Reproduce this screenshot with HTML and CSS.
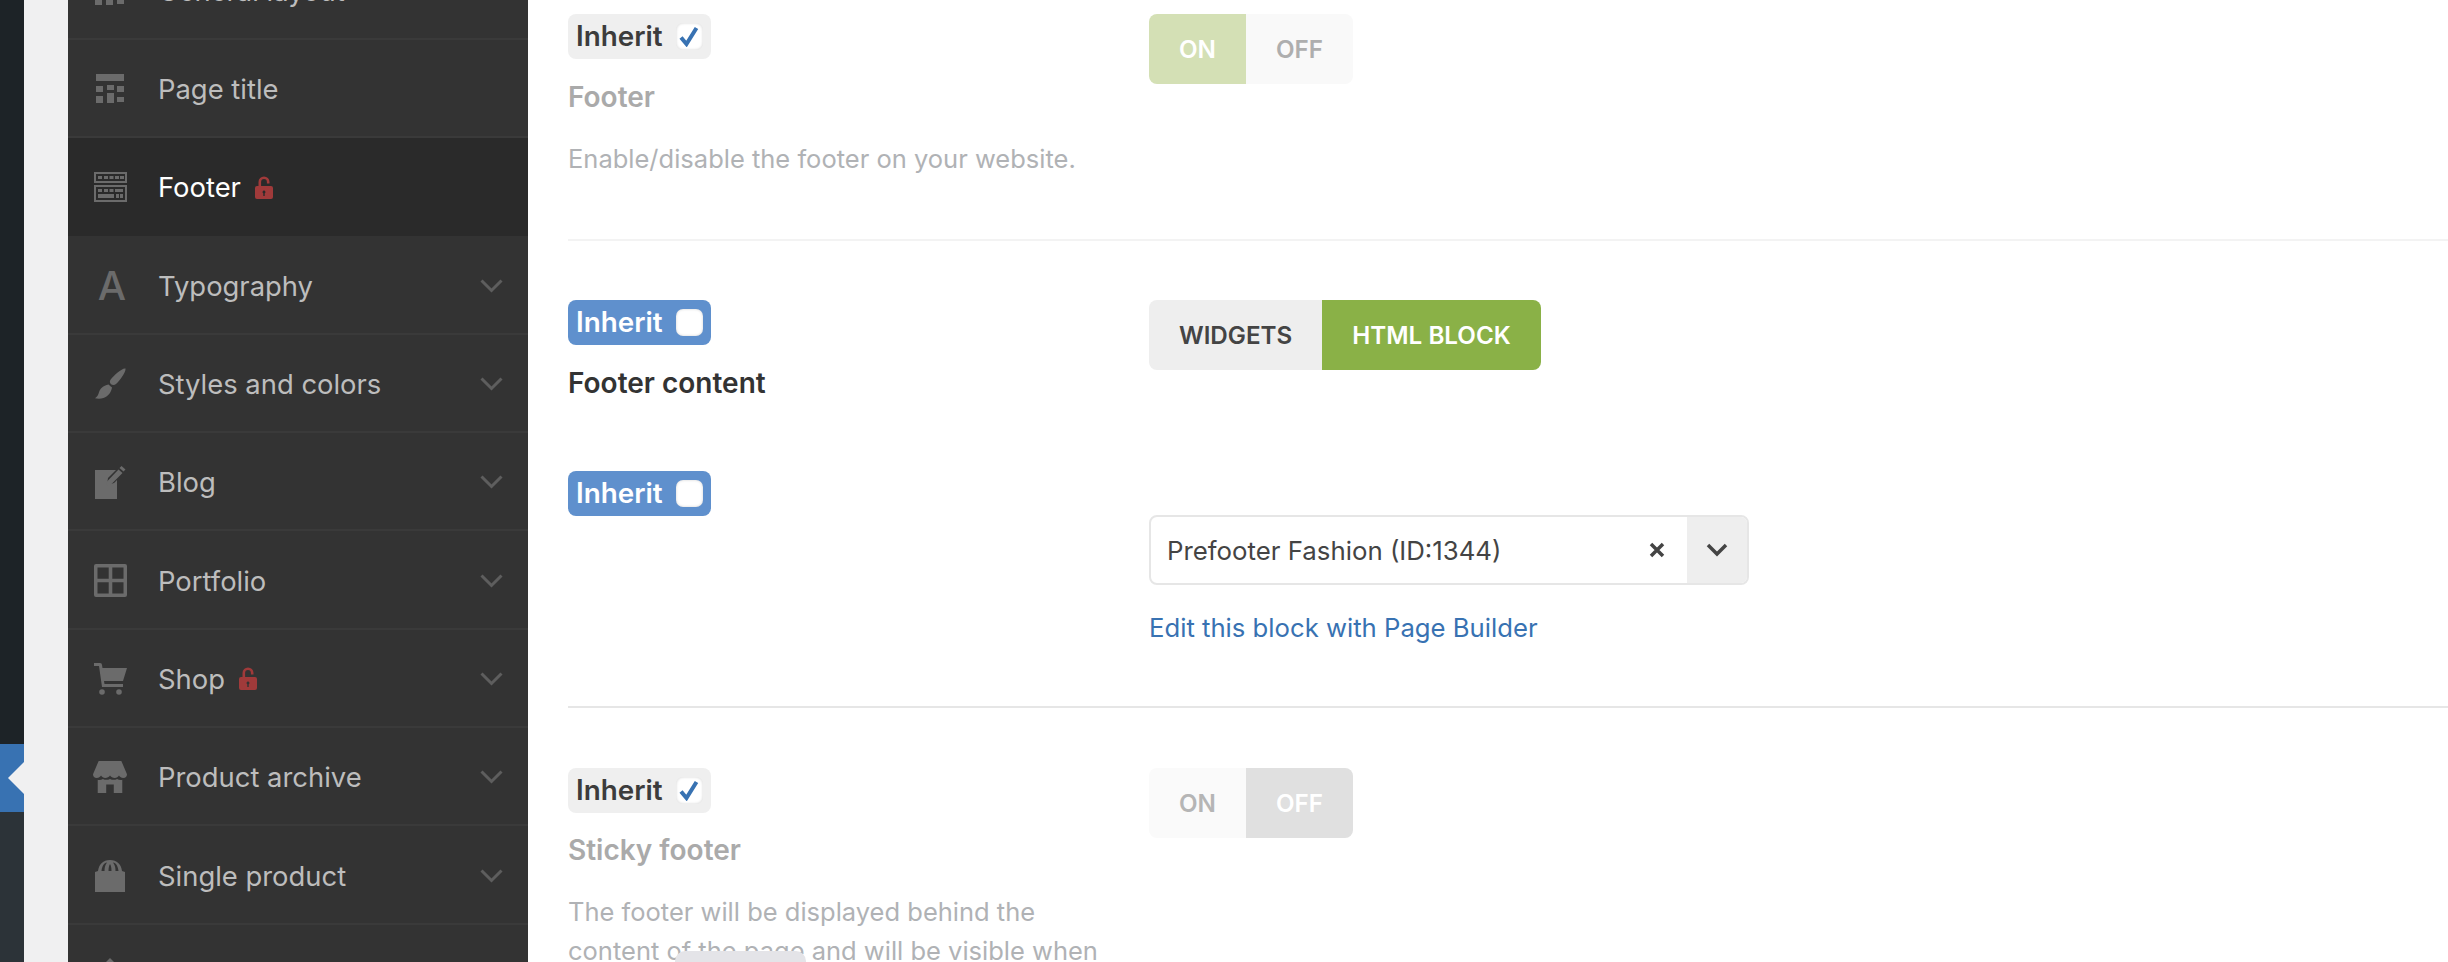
FILE: index.html
```html
<!DOCTYPE html>
<html lang="en">
  <head>
    <meta charset="UTF-8" />
    <title>Theme settings</title>
    <link rel="stylesheet" href="styles.css">
  </head>
  <body>
    <div class="page">
      <div class="wpbar">
        <div class="wpbar-top"></div>
        <div class="wpbar-current"><span class="wpbar-arrow"></span></div>
        <div class="wpbar-rest"></div>
      </div>
      <div class="gutter"></div>
      <ul class="nav">
        <li class="nav-item">
          <span class="nav-icon"><svg width="30" height="29" viewBox="0 0 30 29"><path d="M0 0h29v7H0zM0 12h7v6H0zM11 11h7v5h-7zM22 12h7v6h-7zM0 22h7v7H0zM11 19h7v10h-7zM22 23h7v5h-7z"/></svg></span>
          General layout
        </li>
        <li class="nav-item">
          <span class="nav-icon"><svg width="30" height="29" viewBox="0 0 30 29"><path d="M1 0h28v7H1zM1 12h7v6H1zM12 11h7v5h-7zM22 12h7v6h-7zM1 22h7v7H1zM12 19h7v10h-7zM22 23h7v5h-7z"/></svg></span>
          Page title
        </li>
        <li class="nav-item active">
          <span class="nav-icon"><svg width="33" height="30" viewBox="0 0 33 30"><path fill-rule="evenodd" d="M0 0h33v11H0zM2 2v7h29V2zM0 13h33v17H0zM2 15v13h29V15z"/><path d="M4 4h4v3H4zM10 4h4v3h-4zM15.500 4h4v3h-4zM21 4h4v3h-4zM26 4h4v3h-4zM4 17h4v3H4zM10 17h4v3h-4zM15.500 17h4v3h-4zM21 17h8v3h-8zM4 22h16v4H4zM22 22h3v4h-3zM26 22h3v4h-3z"/></svg></span>
          Footer
          <span class="nav-lock"><svg width="18" height="23" viewBox="0 0 18 23"><path fill-rule="evenodd" d="M2 10h1.500V6a5.500 5.500 0 0 1 11 0v1.500h-2.600V6a2.900 2.900 0 0 0-5.800 0v4H16a2 2 0 0 1 2 2v9a2 2 0 0 1-2 2H2a2 2 0 0 1-2-2v-9a2 2 0 0 1 2-2zm7 4.500a1.500 1.500 0 0 0-.7 2.800V20h1.400v-2.700a1.500 1.500 0 0 0-.7-2.800z"/></svg></span>
        </li>
        <li class="nav-item">
          <span class="nav-icon nav-letter">A</span>
          Typography
          <svg class="nav-chevron" width="23" height="14" viewBox="0 0 23 14"><path d="M1.500 1.500l10 10 10-10"/></svg>
        </li>
        <li class="nav-item">
          <span class="nav-icon"><svg width="31" height="31" viewBox="0 0 31 31"><path d="M30.500.500c.5 3-5 11.500-9.500 15.500-1.500 1.300-3.500 1.300-5 .2-1.300-1-1.500-3-.5-4.500C19 7 27.500-.5 30.500.500zM13.500 16.500c1.700 1.500 3 2.500 3.500 3-.5 4-3.500 9-8.500 10.500-3 1-6.500.8-8.500.2 2.500-1.700 3-3 4-6 1-3.500 4-6.500 9.500-7.700z"/></svg></span>
          Styles and colors
          <svg class="nav-chevron" width="23" height="14" viewBox="0 0 23 14"><path d="M1.500 1.500l10 10 10-10"/></svg>
        </li>
        <li class="nav-item">
          <span class="nav-icon"><svg width="31" height="33" viewBox="0 0 31 33"><path d="M0 4h21l-8 8-1 7 7-2 3-3v19H0z"/><path d="M26.500 0l4 3.500-2 2-4-3.500zM23.500 3.500l4 3.500-12 12-4.500 1 1-4.500z"/></svg></span>
          Blog
          <svg class="nav-chevron" width="23" height="14" viewBox="0 0 23 14"><path d="M1.500 1.500l10 10 10-10"/></svg>
        </li>
        <li class="nav-item">
          <span class="nav-icon"><svg width="33" height="33" viewBox="0 0 33 33"><path fill-rule="evenodd" d="M2 0h29a2 2 0 0 1 2 2v29a2 2 0 0 1-2 2H2a2 2 0 0 1-2-2V2a2 2 0 0 1 2-2zm1.500 3.500v11.200h11.200V3.500zm14.800 0v11.200h11.200V3.500zM3.500 18.300v11.200h11.200V18.300zm14.800 0v11.200h11.200V18.300z"/></svg></span>
          Portfolio
          <svg class="nav-chevron" width="23" height="14" viewBox="0 0 23 14"><path d="M1.500 1.500l10 10 10-10"/></svg>
        </li>
        <li class="nav-item">
          <span class="nav-icon"><svg width="33" height="32" viewBox="0 0 33 32"><path d="M0 0h6a2 2 0 0 1 2 2l.5 3H33l-4 13H10l.5 3H29v3H8L5 3H0z"/><circle cx="8" cy="29" r="2.800"/><circle cx="25" cy="29" r="2.800"/></svg></span>
          Shop
          <span class="nav-lock"><svg width="18" height="23" viewBox="0 0 18 23"><path fill-rule="evenodd" d="M2 10h1.500V6a5.500 5.500 0 0 1 11 0v1.500h-2.600V6a2.900 2.900 0 0 0-5.800 0v4H16a2 2 0 0 1 2 2v9a2 2 0 0 1-2 2H2a2 2 0 0 1-2-2v-9a2 2 0 0 1 2-2zm7 4.500a1.500 1.500 0 0 0-.7 2.800V20h1.400v-2.700a1.500 1.500 0 0 0-.7-2.800z"/></svg></span>
          <svg class="nav-chevron" width="23" height="14" viewBox="0 0 23 14"><path d="M1.500 1.500l10 10 10-10"/></svg>
        </li>
        <li class="nav-item">
          <span class="nav-icon"><svg width="36" height="34" viewBox="0 0 36 34"><path d="M6 0h24l6 14c0 2.200-1.500 4-4 4-2 0-3.500-1-4.500-2.500C26.500 17 25 18 23 18s-4-1-5-2.500C17 17 15 18 13 18s-3.500-1-4.500-2.500C7.500 17 6 18 4 18c-2.500 0-4-1.800-4-4z"/><path d="M5 20c2 .5 4 0 5.500-1 2.300 1.300 5 1.300 7.500 0 2.500 1.300 5.200 1.300 7.500 0 1.500 1 3.500 1.500 5.500 1v14H22v-9h-8v9H5z"/></svg></span>
          Product archive
          <svg class="nav-chevron" width="23" height="14" viewBox="0 0 23 14"><path d="M1.500 1.500l10 10 10-10"/></svg>
        </li>
        <li class="nav-item">
          <span class="nav-icon"><svg width="30" height="32" viewBox="0 0 30 32"><path d="M0 12l3-1C4 4 8 0 15 0s11 4 12 11l3 1v20H0z"/><path class="bag-cut" d="M6.500 11C7 6 9 3 12 2.500 10 5 9.500 8 9.500 11zM20.500 11c0-3-.5-6-2.500-8.500 3 .5 5 3.500 5.500 8.500zM13.500 11c0-3 .5-5.500 1.500-7 1 1.500 1.500 4 1.500 7z"/></svg></span>
          Single product
          <svg class="nav-chevron" width="23" height="14" viewBox="0 0 23 14"><path d="M1.500 1.500l10 10 10-10"/></svg>
        </li>
        <li class="nav-item">
          <span class="nav-icon"><svg width="30" height="32" viewBox="0 0 30 32"><path d="M15 0l4 4H11z"/></svg></span>
        </li>
      </ul>
      <main class="main">
        <section class="option option-footer">
          <div>
            <label class="inherit"><span>Inherit</span><span class="check"><svg width="20" height="21" viewBox="0 0 20 21"><path d="M2 11.500l5.500 6.500 10-16"/></svg></span></label>
            <h3 class="option-title muted">Footer</h3>
            <p class="option-desc">Enable/disable the footer on your website.</p>
          </div>
          <div class="switch">
            <span class="switch-btn on-faded">ON</span>
            <span class="switch-btn off-idle">OFF</span>
          </div>
        </section>
        <hr class="rule rule-light" />
        <section class="option option-content">
          <div>
            <label class="inherit inherit-off"><span>Inherit</span><span class="check"></span></label>
            <h3 class="option-title">Footer content</h3>
          </div>
          <div class="switch">
            <span class="switch-btn widgets">WIDGETS</span>
            <span class="switch-btn html-block">HTML BLOCK</span>
          </div>
        </section>
        <section class="option option-block">
          <div>
            <label class="inherit inherit-off"><span>Inherit</span><span class="check"></span></label>
          </div>
          <div class="block-field">
            <div class="select">
              <span class="select-value">Prefooter Fashion (ID:1344)</span>
              <svg class="select-clear" width="16" height="16" viewBox="0 0 16 16"><path d="M2 2l12 12M14 2L2 14"/></svg>
              <span class="select-arrow"><svg width="22" height="14" viewBox="0 0 22 14"><path d="M2 2l9 9 9-9"/></svg></span>
            </div>
            <a class="block-link" href="#">Edit this block with Page Builder</a>
          </div>
        </section>
        <hr class="rule" />
        <section class="option option-sticky">
          <div class="sticky-text">
            <label class="inherit"><span>Inherit</span><span class="check"><svg width="20" height="21" viewBox="0 0 20 21"><path d="M2 11.500l5.500 6.500 10-16"/></svg></span></label>
            <h3 class="option-title muted sticky-title">Sticky footer</h3>
            <p class="option-desc">The footer will be displayed behind the content of the page and will be visible when</p>
            <span class="scroll-pill"></span>
          </div>
          <div class="switch">
            <span class="switch-btn on-idle">ON</span>
            <span class="switch-btn off-grey">OFF</span>
          </div>
        </section>
      </main>
    </div>
  </body>
</html>
```

FILE: styles.css
```css
* {
  margin: 0;
  padding: 0;
  box-sizing: border-box;
}
html,
body {
  height: 962px;
  overflow: hidden;
  background: #fff;
}
body {
  font-family: Inter, "Liberation Sans", sans-serif;
  color: #333;
}
ul {
  list-style: none;
}
a {
  text-decoration: none;
}
.page {
  display: flex;
  height: 962px;
  overflow: hidden;
}

/* wordpress admin strip */
.wpbar {
  width: 24px;
  flex: none;
  display: flex;
  flex-direction: column;
}
.wpbar-top {
  height: 744px;
  background: #1d2327;
}
.wpbar-current {
  position: relative;
  height: 68px;
  background: #3872b2;
}
.wpbar-arrow {
  position: absolute;
  top: 18px;
  right: 0;
  border-top: 16px solid transparent;
  border-bottom: 16px solid transparent;
  border-right: 16px solid #f0f0f1;
}
.wpbar-rest {
  flex: 1;
  background: #2c3338;
}
.gutter {
  width: 44px;
  flex: none;
  background: #f0f0f1;
}

/* settings nav */
.nav {
  width: 460px;
  flex: none;
  margin-top: -58.6px;
  background: #333;
}
.nav-item {
  display: flex;
  align-items: center;
  height: 98.33px;
  padding: 2px 25px 0;
  border-bottom: 2px solid #3a3a3a;
  font-size: 27.4px;
  color: #bdbdbd;
}
.nav-item.active {
  background: #2a2a2a;
  border-bottom-color: #2a2a2a;
  color: #fff;
}
.nav-icon {
  display: flex;
  justify-content: center;
  align-items: center;
  width: 34px;
  margin-right: 31px;
  flex: none;
}
.nav-icon svg {
  fill: #6b6b6b;
}
.nav-icon .bag-cut {
  fill: #333;
}
.nav-letter {
  font-size: 40px;
  line-height: 40px;
  font-weight: 500;
  color: #6b6b6b;
  padding-left: 4px;
}
.nav-lock {
  display: flex;
  margin-left: 14px;
}
.nav-lock svg {
  fill: #a03a3a;
}
.nav-chevron {
  margin-left: auto;
  fill: none;
  stroke: #5e5e5e;
  stroke-width: 3;
}

/* options */
.main {
  flex: 1;
  padding: 14px 0 0 40px;
  min-width: 0;
}
.option {
  display: grid;
  grid-template-columns: 581px 1fr;
  align-items: start;
}
.option-footer {
  height: 225px;
}
.option-content {
  height: 171px;
}
.option-block {
  height: 235px;
}
.rule {
  height: 2px;
  border: none;
  background: #e6e6e6;
  margin-bottom: 60px;
}
.rule-light {
  background: #f3f3f3;
  margin-bottom: 59px;
}
.inherit {
  display: inline-flex;
  align-items: center;
  gap: 13px;
  height: 45px;
  padding: 0 8px;
  border-radius: 8px;
  background: #efefef;
  font-size: 27.8px;
  font-weight: 600;
  color: #3c3c3c;
}
.inherit > span:first-child {
  padding-bottom: 2px;
}
.inherit-off {
  background: #5f90cd;
  color: #fff;
}
.check {
  display: flex;
  justify-content: center;
  align-items: center;
  width: 27px;
  height: 27px;
  border-radius: 7px;
  background: #fff;
  box-shadow: inset 0 0 3px rgba(0, 0, 0, 0.18);
}
.check svg {
  fill: none;
  stroke: #3872b2;
  stroke-width: 4;
}
.option-title {
  margin-top: 19px;
  font-size: 28px;
  line-height: 39px;
  font-weight: 600;
  color: #333;
}
.option-title.muted {
  color: #aaa;
}
.sticky-title {
  margin-top: 18px;
}
.option-desc {
  width: 545px;
  margin-top: 22px;
  font-size: 25.5px;
  line-height: 39px;
  color: #b0b2b5;
}
.sticky-text {
  position: relative;
}
.scroll-pill {
  position: absolute;
  left: 107px;
  top: 183px;
  width: 131px;
  height: 20px;
  border-radius: 10px 10px 0 0;
  background: #e4e4e8;
}

/* button switches */
.switch {
  display: inline-flex;
  justify-self: start;
  height: 70px;
  border-radius: 8px;
  overflow: hidden;
}
.switch-btn {
  display: flex;
  align-items: center;
  padding: 0 30px;
  font-size: 24.2px;
  font-weight: 600;
}
.on-faded {
  background: #d4e0b5;
  color: #fff;
}
.off-idle {
  background: #f9f9f9;
  color: #aeaeae;
}
.widgets {
  background: #eee;
  color: #444;
}
.html-block {
  background: #8ab147;
  color: #fff;
}
.on-idle {
  background: #fafafa;
  color: #b5b5b5;
}
.off-grey {
  background: #e0e0e0;
  color: #fff;
}

/* html block select */
.block-field {
  padding-top: 44px;
}
.select {
  display: flex;
  align-items: center;
  width: 600px;
  height: 70px;
  border: 2px solid #e6e6e6;
  border-radius: 8px;
  overflow: hidden;
  font-size: 25.8px;
  color: #444;
}
.select-value {
  flex: 1;
  padding-left: 16px;
}
.select-clear {
  margin-right: 22px;
  fill: none;
  stroke: #444;
  stroke-width: 3.5;
}
.select-arrow {
  display: flex;
  justify-content: center;
  align-items: center;
  width: 60px;
  height: 100%;
  background: #eee;
}
.select-arrow svg {
  fill: none;
  stroke: #444;
  stroke-width: 3.5;
}
.block-link {
  display: block;
  margin-top: 23px;
  font-size: 25.7px;
  line-height: 39px;
  color: #3872b2;
}
```
